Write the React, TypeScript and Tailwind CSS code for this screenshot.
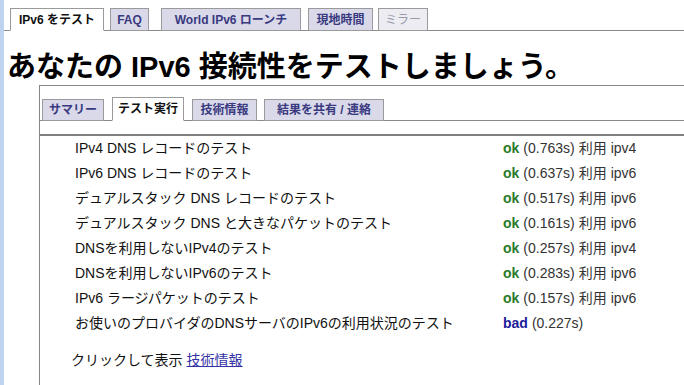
import React from 'react'

const font = { fontFamily: '"Liberation Sans", "Noto Sans CJK JP", sans-serif' }

const topTabs = [
  { label: 'IPv6 をテスト', cls: 'w-[94px] bg-white border-b-white text-[#111]' },
  { label: 'FAQ', cls: 'w-[39px] ml-[6px] bg-[#d9d9ea] text-[#3a3a80]' },
  { label: 'World IPv6 ローンチ', cls: 'w-[140px] ml-[12px] bg-[#d9d9ea] text-[#3a3a80]' },
  { label: '現地時間', cls: 'w-[65px] ml-[7px] bg-[#d9d9ea] text-[#3a3a80]' },
  { label: 'ミラー', cls: 'w-[50px] ml-[5px] bg-[#ececf2] text-[#9a9aa8] font-normal' },
]

const subTabs = [
  { label: 'サマリー', cls: 'w-[62px] h-[22px] bg-[#d9d9ea] text-[#3a3a80]' },
  { label: 'テスト実行', cls: 'w-[72px] h-[24px] ml-[8px] bg-white border-b-white text-[#111]' },
  { label: '技術情報', cls: 'w-[65px] h-[22px] ml-[8px] bg-[#d9d9ea] text-[#3a3a80]' },
  { label: '結果を共有 / 連絡', cls: 'w-[120px] h-[22px] ml-[7px] bg-[#d9d9ea] text-[#3a3a80]' },
]

const results = [
  { name: 'IPv4 DNS レコードのテスト', status: 'ok', time: '0.763s', via: 'ipv4' },
  { name: 'IPv6 DNS レコードのテスト', status: 'ok', time: '0.637s', via: 'ipv6' },
  { name: 'デュアルスタック DNS レコードのテスト', status: 'ok', time: '0.517s', via: 'ipv6' },
  { name: 'デュアルスタック DNS と大きなパケットのテスト', status: 'ok', time: '0.161s', via: 'ipv6' },
  { name: 'DNSを利用しないIPv4のテスト', status: 'ok', time: '0.257s', via: 'ipv4' },
  { name: 'DNSを利用しないIPv6のテスト', status: 'ok', time: '0.283s', via: 'ipv6' },
  { name: 'IPv6 ラージパケットのテスト', status: 'ok', time: '0.157s', via: 'ipv6' },
  { name: 'お使いのプロバイダのDNSサーバのIPv6の利用状況のテスト', status: 'bad', time: '0.227s', via: '' },
]

export default function App() {
  return (
    <div className="flex h-[385px] w-full overflow-hidden bg-white" style={font}>
      {/* left edge strip */}
      <div className="w-[4px] shrink-0 bg-[#bed3ef]" />

      <div className="flex min-w-0 flex-1 flex-col">
        {/* Top tabs */}
        <div className="flex h-[31px] shrink-0 items-end border-b border-[#8a8a8a] pl-[6px]">
          {topTabs.map((t) => (
            <div
              key={t.label}
              className={`-mb-px flex h-[23px] items-center justify-center whitespace-nowrap border border-[#9a9a9a] text-[12px] font-bold ${t.cls}`}
            >
              {t.label}
            </div>
          ))}
        </div>

        <h1 className="mt-[18px] h-[36px] shrink-0 whitespace-nowrap pl-[3px] text-[29px] font-bold leading-[36px] text-black">
          あなたの IPv6 接続性をテストしましょう。
        </h1>

        {/* Panel */}
        <div className="ml-[35px] flex flex-1 flex-col border-l border-t border-[#888]">
          <div className="flex h-[35px] shrink-0 items-end border-b border-[#8a8a8a] pl-[2px]">
            {subTabs.map((t) => (
              <div
                key={t.label}
                className={`-mb-px flex items-center justify-center whitespace-nowrap border border-[#9a9a9a] text-[12px] font-bold ${t.cls}`}
              >
                {t.label}
              </div>
            ))}
          </div>
          <div className="h-[13px] shrink-0" />
          <div className="flex-1 border-t-2 border-[#808080]">
            <div className="grid grid-cols-[428px_1fr] pl-[35px] text-[14px] text-[#111]">
              {results.map((r) => (
                <React.Fragment key={r.name}>
                  <div className="flex h-[25px] items-center whitespace-nowrap">{r.name}</div>
                  <div className="flex h-[25px] items-center whitespace-nowrap text-[#333]">
                    <span className={`font-bold ${r.status === 'ok' ? 'text-[#2b7a2b]' : 'text-[#1c1c9a]'}`}>
                      {r.status}
                    </span>
                    <span className="ml-[4px]">({r.time})</span>
                    {r.via && <span className="ml-[4px]">利用 {r.via}</span>}
                  </div>
                </React.Fragment>
              ))}
            </div>
            <div className="mt-[12px] h-[25px] pl-[31px] text-[14px] leading-[25px] text-[#111]">
              クリックして表示 <a className="text-[#3333a6] underline">技術情報</a>
            </div>
          </div>
        </div>
      </div>
    </div>
  )
}
